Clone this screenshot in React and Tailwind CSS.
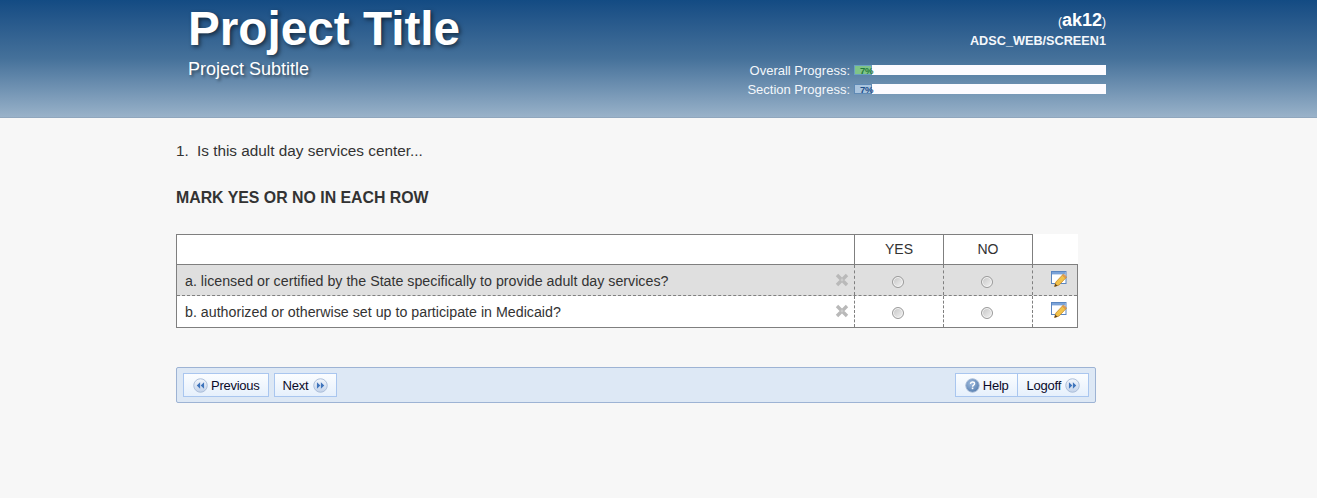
const font = { fontFamily: '"Liberation Sans", Arial, sans-serif' };

function RoundIcon({ dir }) {
  const id = "g" + dir;
  return (
    <svg width="15" height="15" viewBox="0 0 16 16" className="shrink-0">
      <defs>
        <linearGradient id={id} x1="0" y1="0" x2="0" y2="1">
          <stop offset="0" stopColor="#f4f7fc" />
          <stop offset="1" stopColor="#c3d3ea" />
        </linearGradient>
      </defs>
      <circle cx="8" cy="8" r="7.2" fill={`url(#${id})`} stroke="#a9bcd8" strokeWidth="1" />
      {dir === "left" ? (
        <path d="M7.6 4.6v6.8L4 8zM11.8 4.6v6.8L8.2 8z" fill="#3f74bb" />
      ) : (
        <path d="M4.2 4.6v6.8L7.8 8zM8.4 4.6v6.8L12 8z" fill="#3f74bb" />
      )}
    </svg>
  );
}

function HelpIcon() {
  return (
    <svg width="15" height="15" viewBox="0 0 16 16" className="shrink-0">
      <defs>
        <radialGradient id="hg" cx="0.4" cy="0.35" r="0.8">
          <stop offset="0" stopColor="#9fbbdd" />
          <stop offset="1" stopColor="#4a74a8" />
        </radialGradient>
      </defs>
      <circle cx="8" cy="8" r="7.2" fill="url(#hg)" stroke="#a9bcd8" strokeWidth="1" />
      <path d="M5.8 6.3C5.9 4.9 6.8 4.3 8 4.3c1.3 0 2.2.7 2.2 1.8 0 1.6-2.1 1.5-2.1 3.1" fill="none" stroke="#fff" strokeWidth="1.5" />
      <rect x="7.2" y="10.2" width="1.7" height="1.7" fill="#fff" />
    </svg>
  );
}

function CrossIcon() {
  return (
    <svg width="14" height="14" viewBox="0 0 14 14" className="mb-[1px]">
      <path d="M2 2l10 10M12 2L2 12" stroke="#b9b9b9" strokeWidth="3.4" strokeLinecap="butt" />
      <circle cx="7" cy="7" r="1.4" fill="#cbcbcb" />
    </svg>
  );
}

function EditIcon() {
  return (
    <svg width="17" height="17" viewBox="0 0 17 17">
      <rect x="0.5" y="0.5" width="14.5" height="12" fill="#fff" stroke="#5b86c0" />
      <rect x="1" y="1" width="13.5" height="2.4" fill="#7ba3d8" />
      <path d="M3.6 15.4l1.3-4.4 6.8-7.2 3.2 3-6.8 7.2z" fill="#f2c24a" stroke="#c48a28" strokeWidth="0.8" />
      <path d="M11.4 4.2l1.1-1.2 3.2 3-1.1 1.2z" fill="#e59a5c" stroke="#c48a28" strokeWidth="0.5" />
      <path d="M3.4 15.8l.9-3.1 2.3 2.1z" fill="#5a4020" />
    </svg>
  );
}

function Radio() {
  return (
    <input
      type="radio"
      name="x"
      className="appearance-none w-[12px] h-[12px] rounded-full border border-[#9a9a9a] bg-gradient-to-br from-[#c4c4c4] to-[#f4f4f4] shadow-[inset_0_0_0_1px_#f6f6f6] m-0 block"
    />
  );
}

function NavButton({ children, className = "" }) {
  return (
    <button
      className={`h-[24px] flex items-center border border-[#a9c6ef] bg-gradient-to-b from-[#fbfdff] to-[#e6f0fc] text-[13px] tracking-[-0.25px] leading-none text-[#0a0a28] ${className}`}
      style={font}
    >
      {children}
    </button>
  );
}

function ProgressRow({ label, fill, text, tone }) {
  return (
    <div className="flex items-center h-[10px] justify-end">
      <span className="text-[13px] leading-none text-[#f4f7fb] mr-[4px]">{label}</span>
      <div className="relative w-[252px] h-[10px] bg-[#fdfbff]">
        <div className={`absolute left-0 top-0 h-[10px] w-[18px] border ${fill}`} />
        <span className={`absolute left-[6px] top-0 text-[9.5px] tracking-[-0.2px] leading-[11px] font-bold ${tone}`}>{text}</span>
      </div>
    </div>
  );
}

function Row({ label, bg, bottom, textPad }) {
  return (
    <div className={`flex ${bg} ${bottom}`}>
      <div className="w-[677px] flex items-center justify-between pl-[8px] pr-[5px] text-[14.24px] text-[#333333]">
        <span className={textPad}>{label}</span>
        <CrossIcon />
      </div>
      <div className="w-[89px] border-l border-dashed border-[#7f7f7f] flex items-center justify-center pt-[3px] pr-[2px]">
        <Radio />
      </div>
      <div className="w-[89px] border-l border-dashed border-[#7f7f7f] flex items-center justify-center pt-[3px] pr-[2px]">
        <Radio />
      </div>
      <div className="w-[45px] border-l border-dashed border-[#7f7f7f] flex justify-start pt-[6px] pl-[18px]">
        <EditIcon />
      </div>
    </div>
  );
}

export default function App() {
  return (
    <div className="min-h-[498px] bg-[#f7f7f7]" style={font}>
      <header className="h-[118px] bg-gradient-to-b from-[#134b83] via-[#45719a] to-[#99b2c9] border-b border-[#8fa6bd] pl-[188px] pr-[211px] flex justify-between">
        <div className="text-white">
          <h1 className="mt-[1px] text-[47.7px] leading-[56px] font-bold [text-shadow:2px_2px_4px_rgba(0,0,0,0.55)]">Project Title</h1>
          <p className="text-[18px] leading-[20px] mt-[2px] [text-shadow:2px_2px_3px_rgba(0,0,0,0.45)]">Project Subtitle</p>
        </div>
        <div className="w-[380px] flex flex-col">
          <div className="text-right text-white font-bold mt-[10px] h-[20px] leading-[20px]">
            <span className="text-[12px] font-normal">(</span>
            <span className="text-[18px]">ak12</span>
            <span className="text-[12px] font-normal">)</span>
          </div>
          <div className="text-right text-[#f4f7fb] font-bold text-[12.7px] leading-[14px] mt-[4px]">ADSC_WEB/SCREEN1</div>
          <div className="mt-[17px] flex flex-col gap-[9px]">
            <ProgressRow label="Overall Progress:" fill="bg-[#7fc488] border-[#6a9fc0]" text="7%" tone="text-[#1f7a3a]" />
            <ProgressRow label="Section Progress:" fill="bg-[#a9c4de] border-[#5f8ab5]" text="7%" tone="text-[#1d4f8a]" />
          </div>
        </div>
      </header>

      <main className="pl-[176px] w-[1096px]">
        <div className="mt-[24px] flex text-[15.33px] leading-[18px] text-[#333333]">
          <span className="w-[21px]">1.</span>
          <span>Is this adult day services center...</span>
        </div>
        <h2 className="mt-[29px] text-[15.87px] leading-[18px] font-bold text-[#333333]">MARK YES OR NO IN EACH ROW</h2>

        <div className="mt-[27px] w-[902px]">
          <div className="flex h-[31px] bg-white border-b border-[#7f7f7f]">
            <div className="w-[678px] border-t border-l border-[#7f7f7f] shrink-0" />
            <div className="w-[89px] border-t border-l border-[#7f7f7f] flex items-center justify-center text-[14px] text-[#333333] shrink-0">YES</div>
            <div className="w-[89px] border-t border-l border-[#7f7f7f] flex items-center justify-center text-[14px] text-[#333333] shrink-0">NO</div>
            <div className="w-[46px] border-l border-[#7f7f7f] shrink-0" />
          </div>
          <div className="border-l border-r border-b border-[#7f7f7f]">
            <Row label="a. licensed or certified by the State specifically to provide adult day services?" bg="bg-[#dfdfdf] h-[31px]" bottom="border-b border-dashed border-[#7f7f7f]" textPad="pt-[3px]" />
            <Row label="b. authorized or otherwise set up to participate in Medicaid?" bg="bg-white h-[31px]" bottom="" textPad="pt-[2px]" />
          </div>
        </div>

        <nav className="mt-[39px] h-[36px] w-[920px] rounded-[2px] border border-[#9db3d4] bg-[#dde8f5] flex items-center justify-between px-[6px]">
          <div className="flex gap-[5px]">
            <NavButton className="pl-[9px] pr-[8px] gap-[3px]"><RoundIcon dir="left" /><span className="pt-[1px]">Previous</span></NavButton>
            <NavButton className="pl-[8px] pr-[8px] gap-[5px]"><span className="pt-[1px]">Next</span><RoundIcon dir="right" /></NavButton>
          </div>
          <div className="flex">
            <NavButton className="pl-[9px] pr-[8px] gap-[3px]"><HelpIcon /><span className="pt-[1px]">Help</span></NavButton>
            <NavButton className="pl-[9px] pr-[8px] gap-[4px] border-l-0"><span className="pt-[1px]">Logoff</span><RoundIcon dir="right" /></NavButton>
          </div>
        </nav>
      </main>
    </div>
  );
}
